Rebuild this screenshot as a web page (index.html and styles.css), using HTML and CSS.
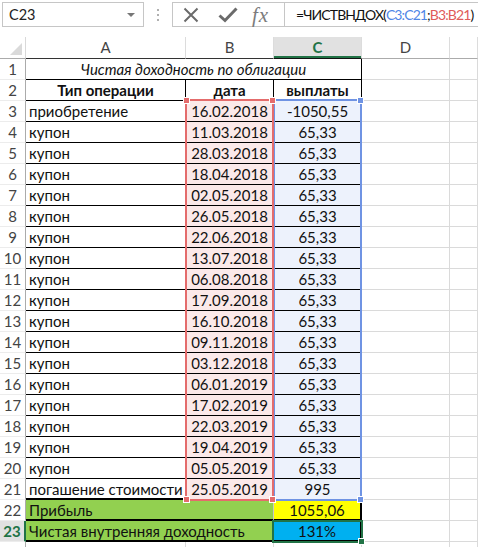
FILE: index.html
```html
<!DOCTYPE html>
<html>
<head>
<meta charset="utf-8">
<link rel="stylesheet" href="styles.css">
</head>
<body>
<div class="app">
  <div class="topbar">
    <div class="namebox"><span class="nb-text">C23</span><span class="caret"></span></div>
    <div class="grip"><i></i><i></i><i></i></div>
    <div class="fbuttons">
      <svg class="ic-x" width="16" height="16" viewBox="0 0 16 16"><path d="M1.5 1.5 L14.5 14.5 M14.5 1.5 L1.5 14.5" stroke="#6b6b6b" stroke-width="2" fill="none"/></svg>
      <svg class="ic-ok" width="20" height="16" viewBox="0 0 20 16"><path d="M1.5 8.5 L7 13.5 L18.5 1.5" stroke="#6b6b6b" stroke-width="3" fill="none"/></svg>
      <span class="fx">fx</span>
    </div>
    <div class="formula">=ЧИСТВНДОХ(<span class="ref-c">C3:C21</span>;<span class="ref-b">B3:B21</span>)</div>
  </div>

  <div class="sheet-wrap">
    <div class="sheet">
      <div class="corner"><span class="tri"></span></div>
      <div class="ch ch-t">A</div>
      <div class="ch ch-t">B</div>
      <div class="ch ch-sel">C</div>
      <div class="ch">D</div>
      <div class="ch"></div>

      <div class="rh">1</div>
      <div class="c t title">Чистая доходность по облигации</div>
      <div class="c"></div><div class="c"></div>

      <div class="rh">2</div>
      <div class="c t b ctr">Тип операции</div>
      <div class="c t b ctr">дата</div>
      <div class="c t b ctr">выплаты</div>
      <div class="c"></div><div class="c"></div>

      <div class="rh">3</div><div class="c t">приобретение</div><div class="c t ctr pk">16.02.2018</div><div class="c t ctr bl">-1050,55</div><div class="c"></div><div class="c"></div>
      <div class="rh">4</div><div class="c t">купон</div><div class="c t ctr pk">11.03.2018</div><div class="c t ctr bl">65,33</div><div class="c"></div><div class="c"></div>
      <div class="rh">5</div><div class="c t">купон</div><div class="c t ctr pk">28.03.2018</div><div class="c t ctr bl">65,33</div><div class="c"></div><div class="c"></div>
      <div class="rh">6</div><div class="c t">купон</div><div class="c t ctr pk">18.04.2018</div><div class="c t ctr bl">65,33</div><div class="c"></div><div class="c"></div>
      <div class="rh">7</div><div class="c t">купон</div><div class="c t ctr pk">02.05.2018</div><div class="c t ctr bl">65,33</div><div class="c"></div><div class="c"></div>
      <div class="rh">8</div><div class="c t">купон</div><div class="c t ctr pk">26.05.2018</div><div class="c t ctr bl">65,33</div><div class="c"></div><div class="c"></div>
      <div class="rh">9</div><div class="c t">купон</div><div class="c t ctr pk">22.06.2018</div><div class="c t ctr bl">65,33</div><div class="c"></div><div class="c"></div>
      <div class="rh">10</div><div class="c t">купон</div><div class="c t ctr pk">13.07.2018</div><div class="c t ctr bl">65,33</div><div class="c"></div><div class="c"></div>
      <div class="rh">11</div><div class="c t">купон</div><div class="c t ctr pk">06.08.2018</div><div class="c t ctr bl">65,33</div><div class="c"></div><div class="c"></div>
      <div class="rh">12</div><div class="c t">купон</div><div class="c t ctr pk">17.09.2018</div><div class="c t ctr bl">65,33</div><div class="c"></div><div class="c"></div>
      <div class="rh">13</div><div class="c t">купон</div><div class="c t ctr pk">16.10.2018</div><div class="c t ctr bl">65,33</div><div class="c"></div><div class="c"></div>
      <div class="rh">14</div><div class="c t">купон</div><div class="c t ctr pk">09.11.2018</div><div class="c t ctr bl">65,33</div><div class="c"></div><div class="c"></div>
      <div class="rh">15</div><div class="c t">купон</div><div class="c t ctr pk">03.12.2018</div><div class="c t ctr bl">65,33</div><div class="c"></div><div class="c"></div>
      <div class="rh">16</div><div class="c t">купон</div><div class="c t ctr pk">06.01.2019</div><div class="c t ctr bl">65,33</div><div class="c"></div><div class="c"></div>
      <div class="rh">17</div><div class="c t">купон</div><div class="c t ctr pk">17.02.2019</div><div class="c t ctr bl">65,33</div><div class="c"></div><div class="c"></div>
      <div class="rh">18</div><div class="c t">купон</div><div class="c t ctr pk">22.03.2019</div><div class="c t ctr bl">65,33</div><div class="c"></div><div class="c"></div>
      <div class="rh">19</div><div class="c t">купон</div><div class="c t ctr pk">19.04.2019</div><div class="c t ctr bl">65,33</div><div class="c"></div><div class="c"></div>
      <div class="rh">20</div><div class="c t">купон</div><div class="c t ctr pk">05.05.2019</div><div class="c t ctr bl">65,33</div><div class="c"></div><div class="c"></div>
      <div class="rh">21</div><div class="c t thick">погашение стоимости</div><div class="c t ctr pk">25.05.2019</div><div class="c t ctr bl">995</div><div class="c"></div><div class="c"></div>

      <div class="rh">22</div>
      <div class="c t green thick">Прибыль</div>
      <div class="c t ctr yellow thick rthick">1055,06</div>
      <div class="c"></div><div class="c"></div>

      <div class="rh rh-sel">23</div>
      <div class="c t green thick">Чистая внутренняя доходность</div>
      <div class="c t ctr cyan thick rthick">131%</div>
      <div class="c"></div><div class="c"></div>

      <div class="rh"></div><div class="c"></div><div class="c"></div><div class="c"></div><div class="c"></div><div class="c"></div>
    </div>

    <div class="range range-c">
      <span class="h h-tr"></span><span class="h h-br"></span>
    </div>
    <div class="range range-b">
      <span class="h h-tl"></span><span class="h h-tr"></span><span class="h h-bl"></span><span class="h h-br"></span>
    </div>
    <div class="selbox"><span class="h h-br"></span></div>
  </div>
</div>
</body>
</html>
```

FILE: styles.css
```css
* { box-sizing: border-box; }
html, body { margin: 0; padding: 0; background: #fff; }
body {
  font-family: Lato, "Open Sans", "Liberation Sans", sans-serif;
  font-size: 15px;
  color: #111;
  width: 478px;
  height: 547px;
  overflow: hidden;
}
.app { width: 478px; }

/* ---------- formula bar ---------- */
.topbar {
  height: 37px;
  display: flex;
  align-items: flex-start;
  padding-top: 2px;
  padding-left: 2px;
}
.namebox {
  flex: 0 0 142px;
  height: 25px;
  border: 1px solid #c6c6c6;
  display: flex;
  align-items: center;
  justify-content: space-between;
  padding: 0 8px 0 6px;
  font-size: 14.5px;
  color: #222;
}
.caret {
  width: 0; height: 0;
  border-left: 4px solid transparent;
  border-right: 4px solid transparent;
  border-top: 4px solid #777;
}
.grip {
  flex: 0 0 28px;
  height: 25px;
  display: flex;
  flex-direction: column;
  align-items: center;
  justify-content: center;
  gap: 3px;
}
.grip i {
  display: block;
  width: 2px; height: 2px;
  background: #b0b0b0;
}
.fbuttons {
  flex: 0 0 112px;
  height: 25px;
  border: 1px solid #c6c6c6;
  border-right: none;
  display: flex;
  align-items: center;
  padding-left: 10px;
}
.ic-x { flex: none; margin-right: 19px; }
.ic-ok { flex: none; margin-right: 14px; }
.fx {
  font-family: "Liberation Serif", "DejaVu Serif", serif;
  font-style: italic;
  font-size: 21px;
  color: #7c7c7c;
  line-height: 22px;
  letter-spacing: 1px;
}
.formula {
  flex: 1 1 auto;
  min-width: 0;
  overflow: hidden;
  height: 25px;
  border: 1px solid #c6c6c6;
  border-right: none;
  padding-left: 11px;
  line-height: 23px;
  font-size: 14px;
  letter-spacing: -0.9px;
  white-space: nowrap;
  color: #111;
}
.ref-c { color: #4f86e6; }
.ref-b { color: #e05a5a; }

/* ---------- sheet ---------- */
.sheet-wrap { position: relative; }
.sheet {
  display: grid;
  grid-template-columns: 26px 160px 88px 88px 88px 1fr;
  grid-template-rows: 22px repeat(24, 21px);
}
.corner {
  border-right: 1px solid #d9d9d9;
  border-bottom: 1px solid #ababab;
  position: relative;
}
.tri {
  position: absolute;
  right: 3px; bottom: 3px;
  width: 0; height: 0;
  border-left: 12px solid transparent;
  border-bottom: 12px solid #dadada;
}
.ch {
  border-right: 1px solid #dcdcdc;
  border-bottom: 1px solid #ababab;
  text-align: center;
  line-height: 21px;
  color: #444;
  font-size: 15px;
}
.ch-t { border-bottom-color: #333; }
.ch-sel {
  background: #e1e1e1;
  color: #217346;
  font-weight: bold;
  border-bottom: 1px solid #111;
  box-shadow: inset 0 -2px 0 #217346;
}
.rh {
  border-right: 1px solid #ababab;
  border-bottom: 1px solid #ececec;
  text-align: center;
  line-height: 20px;
  color: #444;
  font-size: 15px;
}
.rh-sel {
  background: #e1e1e1;
  color: #217346;
  font-weight: bold;
  border-right: 2px solid #217346;
}
.c {
  border-right: 1px solid #dadada;
  border-bottom: 1px solid #dadada;
  padding: 0 3px;
  line-height: 20px;
  white-space: nowrap;
  overflow: hidden;
}
.t { border-right-color: #000; border-bottom-color: #000; }
.title {
  grid-column: span 3;
  text-align: center;
  font-style: italic;
}
.b { font-weight: bold; }
.ctr { text-align: center; }
.pk { background: #fbe9e9; }
.bl { background: #edf2fc; }
.green { grid-column: span 2; background: #92d050; border-right-color: #c8c8c8; }
.yellow { background: #ffff00; }
.cyan { background: #00b0f0; }
.thick { border-bottom-width: 2px; }
.rthick { border-right-width: 2px; }

/* ---------- range overlays ---------- */
.range {
  position: absolute;
  top: 62px;
  height: 402px;
  width: 89px;
  border: 2px solid;
}
.range-b { left: 185px; border-color: #e46c6c; }
.range-c { left: 273px; border-color: #6f93e3; }
.h {
  position: absolute;
  width: 7px; height: 7px;
  border: 1px solid #fff;
}
.range-b .h { background: #e46c6c; }
.range-c .h { background: #6f93e3; }
.h-tl { left: -4px; top: -4px; }
.h-tr { right: -4px; top: -4px; }
.h-bl { left: -4px; bottom: -4px; }
.h-br { right: -4px; bottom: -4px; }
.selbox {
  position: absolute;
  left: 272px;
  top: 483px;
  width: 91px;
  height: 23px;
  border: 2px solid #217346;
}
.selbox .h { background: #217346; }
```
